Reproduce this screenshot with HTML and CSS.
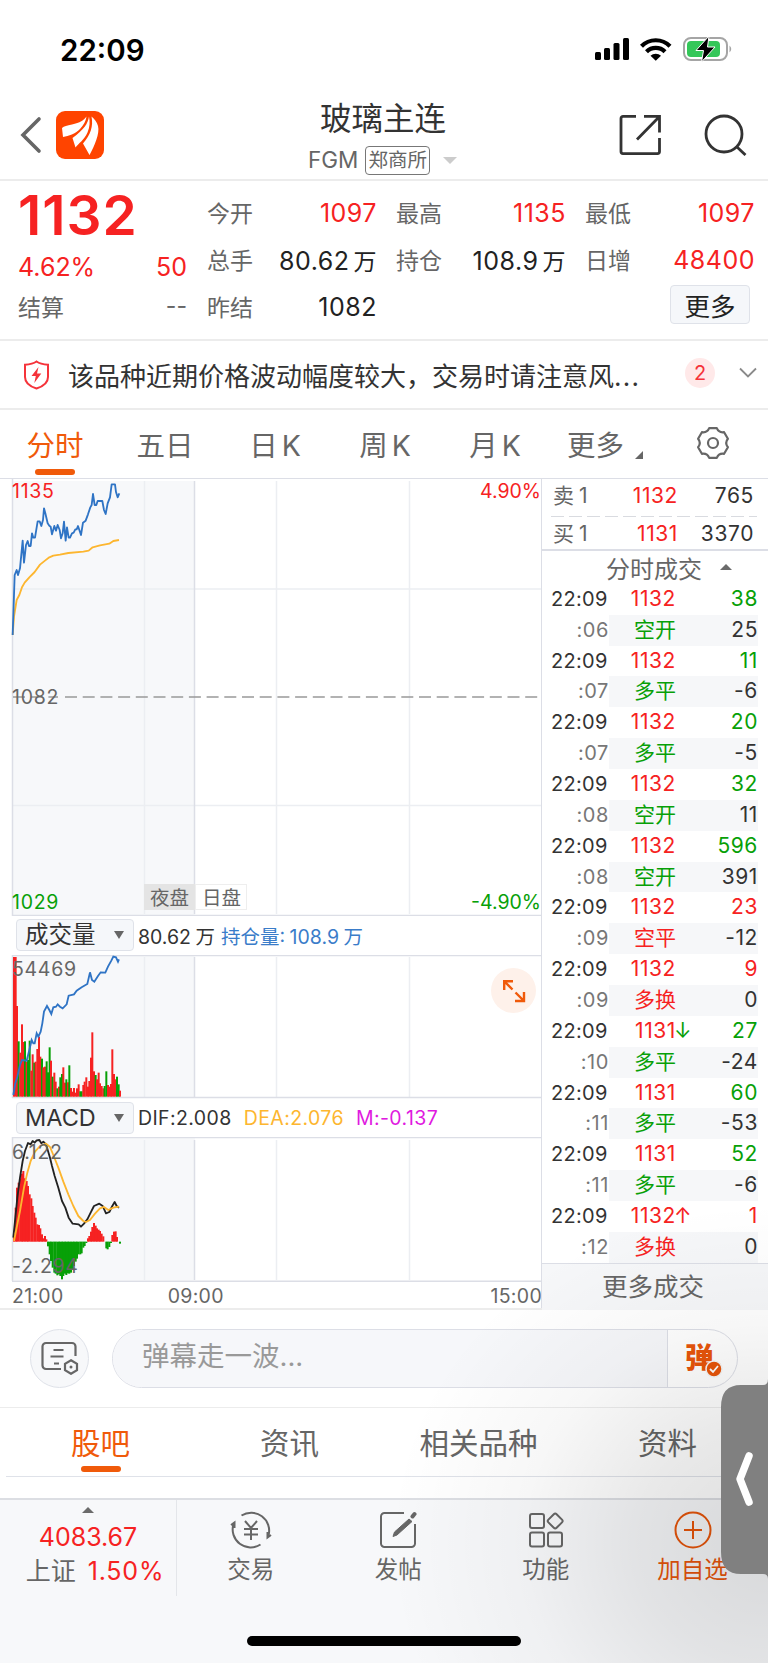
FILE: index.html
```html
<!DOCTYPE html>
<html lang="zh-CN">
<head>
    <meta charset="UTF-8">
    <meta name="viewport" content="width=device-width, initial-scale=1.0">
    <title>玻璃主连 FGM</title>
    <link rel="stylesheet" href="styles.css">
</head>
<body>
    <div class="phone">
        <div class="status">
            <span class="clock">22:09</span>
            <svg class="status-icons" width="140" height="28" viewBox="0 0 140 28">
                <rect x="0" y="16" width="6" height="8" rx="1.5"/>
                <rect x="9" y="12" width="6" height="12" rx="1.5"/>
                <rect x="18.500" y="7" width="6" height="17" rx="1.500"/>
                <rect x="28" y="2" width="6" height="22" rx="1.500"/>
                <g fill="none" stroke="#000" stroke-width="4.200">
                    <path d="M46.500 10.200a20 20 0 0 1 28.500 0"/>
                    <path d="M51.500 15.800a13 13 0 0 1 18.500 0"/>
                </g>
                <path d="M55.500 19.800a7.500 7.500 0 0 1 10.500 0l-5.250 5z"/>
                <rect x="89" y="2" width="43" height="22" rx="7" fill="none" stroke="#a5a5a5" stroke-width="2"/>
                <rect x="92" y="5" width="33" height="16" rx="4" fill="#34c759"/>
                <path d="M134.500 9.500q3.500 3.500 0 7z" fill="#a5a5a5"/>
                <path d="M114 0L101 14.500h7.500L106.500 26 120 11h-7.500z" stroke="#fff" stroke-width="1"/>
            </svg>
        </div>

        <header class="header">
            <div class="header-left">
                <svg width="22" height="38" viewBox="0 0 22 38"><path d="M19 3L3 19l16 16" fill="none" stroke="#666" stroke-width="3.600" stroke-linecap="round"/></svg>
                <svg width="48" height="48" viewBox="0 0 48 48">
                    <rect width="48" height="48" rx="9" fill="#ff4400"/>
                    <g fill="#fff">
                        <path d="M30.500 5.500C28 9 24 12 16 13.500c-5 1-8 1.500-10 3.500L7 26c6-1.500 12-2.500 17-8 3.500-4 6-8 6.500-12.500z"/>
                        <path d="M33 5.500c-1 7-5 13-16.500 21.500l3 9.500c3-4 9-8 12-15 2.500-6 2.500-11 1.500-16z"/>
                        <path d="M35.500 5.500c2 10-1 18-8.500 27l6.500 11.500c5-9 10.500-22 8.500-29-1-4-3.500-7-6.500-9.500z"/>
                    </g>
                </svg>
            </div>
            <div class="title">
                <h1>玻璃主连</h1>
                <p><span>FGM</span><span class="exchange">郑商所</span><i class="tri-down"></i></p>
            </div>
            <div class="header-right">
                <svg width="44" height="42" viewBox="0 0 44 42" fill="none" stroke="#333" stroke-width="2.800">
                    <path d="M17 2.400H4a2 2 0 0 0-2 2v33.200a2 2 0 0 0 2 2h34.500a2 2 0 0 0 2-2V24"/>
                    <path d="M25 2.400h15.500v16M40 3L18 25.500"/>
                </svg>
                <svg width="44" height="42" viewBox="0 0 44 42" fill="none" stroke="#333" stroke-width="2.800"><circle cx="20" cy="20" r="18"/><path d="M33 33l8.500 8"/></svg>
            </div>
        </header>

        <section class="quote">
            <div class="quote-main">
                <div class="last">1132</div>
                <div class="pair change"><span>4.62%</span><span>50</span></div>
                <div class="pair settle"><span>结算</span><span>--</span></div>
            </div>
            <div class="quote-grid">
                <div class="pair"><span>今开</span><b class="red">1097</b></div>
                <div class="pair"><span>最高</span><b class="red">1135</b></div>
                <div class="pair"><span>最低</span><b class="red">1097</b></div>
                <div class="pair"><span>总手</span><b>80.62<em>万</em></b></div>
                <div class="pair"><span>持仓</span><b>108.9<em>万</em></b></div>
                <div class="pair"><span>日增</span><b class="red">48400</b></div>
                <div class="pair"><span>昨结</span><b>1082</b></div>
                <div></div>
                <div class="more-cell"><button class="more">更多</button></div>
            </div>
        </section>

        <section class="notice">
            <svg width="27" height="30" viewBox="0 0 27 30"><path d="M13.500 1.500C10 4 6 4.500 2 4.800V17c0 6 5 9.500 11.500 11.500C20 26.500 25 23 25 17V4.800C21 4.500 17 4 13.500 1.500z" fill="none" stroke="#f5333a" stroke-width="2"/><path d="M15.500 7L8.500 16h4.300l-1.500 7 7-9.500h-4.300z" fill="#f5333a"/></svg>
            <p>该品种近期价格波动幅度较大，交易时请注意风<em>...</em></p>
            <span class="count">2</span>
            <svg class="chevron" width="18" height="12" viewBox="0 0 18 12"><path d="M1 1.500l8 8 8-8" fill="none" stroke="#8a8a8a" stroke-width="1.800"/></svg>
        </section>

        <nav class="periods">
            <a class="on">分时</a><a>五日</a><a>日 K</a><a>周 K</a><a>月 K</a><a class="drop">更多<i></i></a>
            <svg width="34" height="32" viewBox="0 0 34 32" fill="none" stroke="#666" stroke-width="2.200" stroke-linejoin="round"><path d="M13.200 1.200h7.600Q22.750 6 28.100 5.200l3.800 6.500Q28.500 16 31.900 20.300l-3.800 6.500Q22.750 26 20.800 30.800h-7.600Q11.250 26 5.900 26.800L2.100 20.300Q5.500 16 2.100 11.700L5.900 5.200Q11.250 6 13.200 1.200z"/><circle cx="17" cy="16" r="5"/></svg>
        </nav>

        <main class="board">
            <div class="charts">
                <svg class="chart" width="542" height="437" viewBox="0 0 542 437">
                    <rect x="13" y="2" width="182" height="434" fill="#f7f8fa"/>
                    <path class="grid" d="M144.500 2v433M276.500 2v433M409.500 2v433M13 110h529M13 326.500h529"/>
                    <path class="axis" d="M12.500 0v437M194.500 2v433M12 436.500h530"/>
                    <path d="M13 218h45M65 218h474" stroke="#999" stroke-width="1.500" stroke-dasharray="12 5.700"/>
                    <g transform="scale(.3333) translate(0 -27)" fill="none" stroke-width="5.500" stroke-linejoin="round">
                        <polyline stroke="#fdb62f" points="38,495 42,440 50,390 58,375 66,352 74,338 88,322 104,306 120,284 135,272 148,262 160,257 180,254 205,249 250,245 266,242 278,232 300,226 328,221 340,213 357,210"/>
                        <polyline stroke="#2f74c5" points="38,495 44,315 50,300 54,315 60,295 68,212 72,278 78,225 83,213 87,228 92,228 96,190 100,203 105,203 113,154 119,154 124,168 129,150 132,115 136,130 143,160 148,167 152,170 156,193 163,168 168,182 173,165 179,180 183,205 188,190 192,155 197,212 201,172 206,203 210,203 216,190 221,188 226,178 230,178 234,168 243,195 249,158 257,152 264,133 271,112 275,105 279,72 284,105 289,105 293,93 307,93 312,120 317,132 323,100 330,82 335,43 345,43 348,66 353,82 358,70"/>
                    </g>
                    <text x="12" y="19" class="up wide">1135</text>
                    <text x="541" y="19" text-anchor="end" class="up">4.90%</text>
                    <text x="12" y="225" class="wide">1082</text>
                    <rect x="144" y="405" width="51" height="26" fill="#e4e4e4"/>
                    <rect x="195.500" y="405.500" width="51" height="25" fill="#fff" stroke="#eee"/>
                    <text x="150" y="426">夜盘</text>
                    <text x="202" y="426">日盘</text>
                    <text x="12" y="430" class="down wide">1029</text>
                    <text x="541" y="430" text-anchor="end" class="down">-4.90%</text>
                </svg>
                <div class="indicator vol">
                    <span class="select">成交量<i></i></span>
                    <span>80.62 万</span><span class="blue">持仓量: 108.9 万</span>
                </div>
                <div class="volume">
                    <svg class="chart" width="542" height="144" viewBox="0 0 542 144">
                        <rect x="13" y="1" width="182" height="141" fill="#f7f8fa"/>
                        <path class="grid" d="M144.500 2v140M276.500 2v140M409.500 2v140"/>
                        <path class="axis" d="M12.500 0v143M194.500 2v140M12 .5h530M12 142.500h530"/>
                        <g transform="scale(.3333) translate(0 -255)">
                            <g id="volume-bars"></g>
                            <polyline fill="none" stroke="#2f74c5" stroke-width="5.500" points="40,675 46,640 52,620 60,585 66,570 80,572 88,540 95,510 100,520 104,520 110,490 115,500 122,485 127,460 132,425 141,408 148,420 154,432 160,412 168,410 173,403 180,410 188,415 200,403 206,377 222,373 230,362 245,352 262,342 270,307 276,330 283,335 294,318 302,307 316,308 324,290 334,272 340,260 348,262 354,275 357,268"/>
                        </g>
                        <text x="12" y="21" class="wide">54469</text>
                    </svg>
                    <span class="expand"><svg width="24" height="24" viewBox="0 0 24 24" fill="none" stroke="#f05a0a" stroke-width="2.400"><path d="M2.200 11V2.200H11M2.500 2.500l8 8M22 13v9h-9M21.500 21.500l-8-8"/></svg></span>
                </div>
                <div class="indicator macd">
                    <span class="select">MACD<i></i></span>
                    <span>DIF:2.008</span><span class="yellow">DEA:2.076</span><span class="pink">M:-0.137</span>
                </div>
                <svg class="chart" width="542" height="145" viewBox="0 0 542 145">
                    <rect x="13" y="1" width="182" height="142" fill="#f7f8fa"/>
                    <path class="grid" d="M144.500 3v140M276.500 3v140M409.500 3v140"/>
                    <path class="axis" d="M12.500 0v144M194.500 3v140M12 .5h530M12 144.300h530"/>
                    <g transform="scale(.3333) translate(0 -138)">
                        <g id="macd-bars"></g>
                        <g fill="none" stroke-width="5.500" stroke-linejoin="round">
                            <polyline stroke="#222" points="40,440 47,370 52,320 60,260 68,210 75,180 84,156 92,160 98,150 104,155 110,148 118,147 124,157 130,152 138,160 144,180 150,200 156,225 164,255 175,290 186,330 196,350 206,380 218,398 236,400 243,407 252,398 262,385 272,365 282,345 298,338 308,345 318,367 328,363 337,345 344,333 350,345 357,350"/>
                            <polyline stroke="#fdb62f" points="42,450 50,410 60,360 72,290 82,245 92,210 105,182 120,165 138,158 150,168 160,192 175,230 190,272 205,310 220,345 235,375 250,390 258,393 270,387 285,368 300,352 312,348 325,357 340,350 357,347"/>
                        </g>
                    </g>
                    <text x="12" y="22" class="wide">6.122</text>
                    <text x="12" y="136" class="wide">-2.294</text>
                </svg>
                <div class="times"><span>21:00</span><span>09:00</span><span>15:00</span></div>
            </div>

            <aside class="ticks">
                <div class="book">
                    <div class="level"><span>卖 1</span><span class="red">1132</span><span>765</span></div>
                    <div class="level"><span>买 1</span><span class="red">1131</span><span>3370</span></div>
                </div>
                <div class="ticks-title">分时成交<i class="tri-up"></i></div>
                <div class="tick"><span>22:09</span><span class="red">1132</span><span class="green">38</span><span>:06</span><span class="green">空开</span><span>25</span></div>
                <div class="tick"><span>22:09</span><span class="red">1132</span><span class="green">11</span><span>:07</span><span class="green">多平</span><span>-6</span></div>
                <div class="tick"><span>22:09</span><span class="red">1132</span><span class="green">20</span><span>:07</span><span class="green">多平</span><span>-5</span></div>
                <div class="tick"><span>22:09</span><span class="red">1132</span><span class="green">32</span><span>:08</span><span class="green">空开</span><span>11</span></div>
                <div class="tick"><span>22:09</span><span class="red">1132</span><span class="green">596</span><span>:08</span><span class="green">空开</span><span>391</span></div>
                <div class="tick"><span>22:09</span><span class="red">1132</span><span class="red">23</span><span>:09</span><span class="red">空平</span><span>-12</span></div>
                <div class="tick"><span>22:09</span><span class="red">1132</span><span class="red">9</span><span>:09</span><span class="red">多换</span><span>0</span></div>
                <div class="tick"><span>22:09</span><span class="red">1131<i class="arrow green">↓</i></span><span class="green">27</span><span>:10</span><span class="green">多平</span><span>-24</span></div>
                <div class="tick"><span>22:09</span><span class="red">1131</span><span class="green">60</span><span>:11</span><span class="green">多平</span><span>-53</span></div>
                <div class="tick"><span>22:09</span><span class="red">1131</span><span class="green">52</span><span>:11</span><span class="green">多平</span><span>-6</span></div>
                <div class="tick"><span>22:09</span><span class="red">1132<i class="arrow">↑</i></span><span class="red">1</span><span>:12</span><span class="red">多换</span><span>0</span></div>
                <div class="ticks-more">更多成交</div>
            </aside>
        </main>

        <section class="danmu">
            <span class="danmu-set">
                <svg width="38" height="34" viewBox="0 0 38 34" fill="none" stroke="#666" stroke-width="2.200"><path d="M20 28H5a3.500 3.500 0 0 1-3.500-3.500v-19A3.500 3.500 0 0 1 5 2h26a3.500 3.500 0 0 1 3.500 3.500V15M12.500 9h10M9.500 15.500h13M13 22.500h5"/><path d="M30 19.200l6 3.600v6.400l-6 3.600-6-3.600v-6.400z"/><circle cx="30" cy="26" r="1.500" fill="#666" stroke="none"/></svg>
            </span>
            <div class="danmu-box">
                <span class="danmu-input">弹幕走一波...</span>
                <span class="danmu-btn">弹<svg width="18" height="18" viewBox="0 0 18 18"><circle cx="9" cy="9" r="8" fill="#e8550a" stroke="#f6f6f6" stroke-width="1.500"/><path d="M5 9l3 3 5-6" fill="none" stroke="#fff" stroke-width="1.800"/></svg></span>
            </div>
        </section>

        <nav class="tabs"><a class="on">股吧</a><a>资讯</a><a>相关品种</a><a>资料</a></nav>

        <footer class="bottom">
            <div class="index">
                <i class="tri-up"></i>
                <b>4083.67</b>
                <p><span>上证</span><b>1.50%</b></p>
            </div>
            <a>
                <svg width="44" height="38" viewBox="0 0 44 38" fill="none" stroke="#666" stroke-width="2"><path d="M12.500 4.500a18 18 0 0 1 27 20M31.500 33.500A18 18 0 0 1 4.500 13M2 14l3.500-2.500V17M42 24l-3.500 2.500V21M16 10l6 7 6-7M22 17v12M15 18h14M15 23.500h14"/></svg>
                交易
            </a>
            <a>
                <svg width="38" height="38" viewBox="0 0 38 38" fill="none" stroke="#666" stroke-width="2"><path d="M25 2H5.500A3.500 3.500 0 0 0 2 5.500v27A3.500 3.500 0 0 0 5.500 36h27a3.500 3.500 0 0 0 3.500-3.500V13"/><path d="M33.500 5.500l2-2.500" stroke-width="4" stroke-linecap="round"/><path d="M30 8l3 2.500L18 24l-4 1.500 1.500-4.500z" fill="#666" stroke-width="1"/></svg>
                发帖
            </a>
            <a>
                <svg width="38" height="38" viewBox="0 0 38 38" fill="none" stroke="#666" stroke-width="2"><rect x="3" y="3" width="14" height="14" rx="2"/><rect x="3" y="21.500" width="14" height="14" rx="2"/><rect x="21" y="21.500" width="14" height="14" rx="2"/><path d="M26.800 3.200q1.400-1.400 2.800 0l5.400 5.400q1.400 1.400 0 2.800l-5.400 5.400q-1.400 1.400-2.800 0l-5.400-5.400q-1.400-1.400 0-2.800z"/></svg>
                功能
            </a>
            <a class="add">
                <svg width="38" height="38" viewBox="0 0 38 38" fill="none" stroke="#e8550a" stroke-width="2"><circle cx="19" cy="19" r="17.500"/><path d="M19 10v18M10 19h18"/></svg>
                加自选
            </a>
            <span class="home"></span>
        </footer>

        <div class="side-shade"></div>
        <svg class="side-handle" width="47" height="200" viewBox="0 0 47 200">
            <path d="M47 0q0 6-5 6H20Q0 6 0 28v145q0 22 20 22h22q5 0 5 5z" fill="#808080"/>
            <path d="M28 77L19 100l9 23" fill="none" stroke="#fff" stroke-width="7.500" stroke-linecap="round" stroke-linejoin="round"/>
        </svg>
    </div>
    <script src="script.js"></script>
</body>
</html>
```

FILE: styles.css
```css
* {
    box-sizing: border-box;
}
body {
    margin: 0;
    background: #fff;
    color: #333;
    font-family: Inter, "Noto Sans CJK SC", sans-serif;
}
h1, p {
    margin: 0;
    font-weight: 400;
}
b {
    font-weight: 400;
}
em, i {
    font-style: normal;
}
svg {
    display: block;
    flex: none;
}
.phone {
    position: relative;
    width: 768px;
    height: 1663px;
    overflow: hidden;
}
.red {
    color: #f62222;
}
.green {
    color: #07a007;
}
.tri-up {
    border: 6.5px solid transparent;
    border-top: 0;
    border-bottom: 6.5px solid #6b6b6b;
}
.tri-down {
    border: 7px solid transparent;
    border-bottom: 0;
    border-top: 7px solid #ccc;
}

/* status bar */
.status {
    display: flex;
    justify-content: space-between;
    align-items: center;
    height: 90px;
    padding: 9px 33px 0 60px;
}
.clock {
    font-size: 29.5px;
    font-weight: 600;
    color: #000;
}

/* header */
.header {
    display: flex;
    justify-content: space-between;
    height: 91px;
    border-bottom: 2px solid #ececec;
}
.header-left {
    display: flex;
    align-items: center;
    gap: 14px;
    width: 200px;
    padding-left: 20px;
    padding-top: 1px;
}
.title {
    display: flex;
    flex-direction: column;
    align-items: center;
}
.title h1 {
    font-size: 31.5px;
    line-height: 42px;
    margin: 8px 0 0 -2px;
}
.title p {
    display: flex;
    align-items: center;
    margin: 5px 0 0 -3px;
    font-size: 22.5px;
    line-height: 30px;
    color: #666;
}
.exchange {
    height: 29px;
    margin: 0 13px 0 7px;
    padding: 0 2px;
    border: 1.5px solid #777;
    border-radius: 4px;
    font-size: 19.5px;
    line-height: 27px;
}
.header-right {
    display: flex;
    align-items: center;
    justify-content: flex-end;
    gap: 41px;
    width: 200px;
    padding: 1px 20px 0 0;
}

/* quote */
.quote {
    display: flex;
    gap: 20px;
    height: 160px;
    padding: 0 12px 0 18px;
    border-bottom: 2px solid #ececec;
}
.quote-main {
    width: 169px;
}
.last {
    height: 68px;
    font-size: 55px;
    line-height: 68px;
    font-weight: 600;
    letter-spacing: 1px;
    color: #f62222;
}
.pair {
    display: flex;
    justify-content: space-between;
    align-items: center;
    font-size: 23px;
    color: #666;
}
.quote-grid .pair span, .settle span {
    margin-top: -2px;
}
.pair b {
    font-size: 25px;
    letter-spacing: .5px;
    color: #222;
}
.pair b.red {
    color: #f62222;
}
.pair em {
    margin-left: 4px;
    font-size: 23px;
}
.change {
    height: 36px;
    font-size: 25px;
    color: #f62222;
}
.settle {
    height: 44px;
}
.quote-grid {
    flex: 1;
    display: grid;
    grid-template-columns: 170px 170px 170px;
    grid-template-rows: 47px 48px 46px;
    column-gap: 19px;
    padding-top: 8px;
}
.more-cell {
    display: flex;
    justify-content: flex-end;
    padding: 1px 5px 0 0;
}
.more {
    width: 80px;
    height: 39px;
    padding: 0;
    border: 1.5px solid #dfe2e9;
    border-radius: 4px;
    background: #f5f7fa;
    color: #222;
    font: 25.5px "Noto Sans CJK SC", sans-serif;
    line-height: 35px;
}

/* notice */
.notice {
    display: flex;
    align-items: center;
    height: 69px;
    padding: 0 11px 0 23px;
    border-bottom: 2px solid #ececec;
}
.notice p {
    flex: 1;
    margin-left: 18px;
    font-size: 26px;
    white-space: nowrap;
}
.notice em {
    letter-spacing: 1.2px;
}
.count {
    width: 30px;
    height: 30px;
    margin: 0 24px 3px 0;
    border-radius: 50%;
    background: #ffe9e9;
    color: #f5333a;
    font-size: 20px;
    line-height: 30px;
    text-align: center;
}
.chevron {
    margin-bottom: 4px;
}

/* period tabs */
.periods {
    display: flex;
    align-items: center;
    height: 69px;
    padding-bottom: 2px;
    border-bottom: 1.5px solid #dcdee6;
    font-size: 28.5px;
    color: #666;
    word-spacing: -4px;
}
.periods a {
    width: 110px;
    text-align: center;
}
.periods svg {
    margin-left: 36px;
}
.periods a, .tabs a {
    position: relative;
}
.on {
    color: #f05a0a;
}
.on::after {
    content: "";
    position: absolute;
    left: 50%;
    bottom: -11px;
    width: 40px;
    height: 6px;
    margin-left: -20px;
    border-radius: 3px;
    background: #f05a0a;
}
.drop i {
    display: inline-block;
    margin-left: 11px;
    border-left: 8px solid transparent;
    border-bottom: 8px solid #666;
    transform: translateY(3px);
}

/* charts */
.board {
    display: flex;
    height: 831px;
    border-bottom: 2px solid #ececec;
}
.charts {
    width: 542px;
}
.chart text {
    font-size: 19.5px;
    fill: #666;
}
.chart .wide {
    letter-spacing: .7px;
}
.chart .up {
    fill: #f62222;
}
.chart .down {
    fill: #07a007;
}
.grid, .axis {
    fill: none;
    stroke: #eceef2;
    stroke-width: 1.5;
}
.axis {
    stroke: #dcdee6;
}
.indicator {
    display: flex;
    align-items: center;
    gap: 6px;
    height: 38px;
    padding-left: 16px;
    font-size: 19.5px;
    color: #333;
}
.vol {
    height: 39px;
    word-spacing: -1px;
}
.vol span {
    margin-top: -1px;
}
.select {
    display: flex;
    align-items: center;
    justify-content: space-between;
    width: 118px;
    height: 32px;
    margin-right: -2px;
    padding: 0 9px 0 8px;
    border: 1.5px solid #dfe2e9;
    border-radius: 4px;
    background: #f5f7fa;
    font-size: 23.5px;
    line-height: 28px;
    letter-spacing: 0;
}
.select i {
    border: 5px solid transparent;
    border-top: 8px solid #666;
    border-bottom: 0;
}
.blue {
    color: #3a7cc9;
}
.macd {
    gap: 12px;
    letter-spacing: .4px;
}
.macd .select {
    margin-right: -8px;
}
.yellow {
    color: #fdb62f;
}
.pink {
    color: #e01ae0;
}
.volume {
    position: relative;
}
.expand {
    position: absolute;
    right: 6px;
    top: 13px;
    display: flex;
    align-items: center;
    justify-content: center;
    width: 45px;
    height: 45px;
    border-radius: 50%;
    background: #fef1ea;
}
.times {
    display: grid;
    grid-template-columns: 1fr 1fr 1fr;
    padding: 2px 0 0 12px;
    font-size: 19.5px;
    line-height: 24px;
    letter-spacing: .3px;
    color: #666;
}
.times span:nth-child(2) {
    margin-left: -21px;
}
.times span:last-child {
    text-align: right;
}

/* trades */
.ticks {
    flex: 1;
    display: flex;
    flex-direction: column;
    margin-left: -1px;
    border-left: 1.5px solid #dcdee6;
    font-size: 21px;
    letter-spacing: .6px;
}
.book {
    height: 72px;
    border-bottom: 2px solid #dcdee6;
}
.level {
    display: grid;
    grid-template-columns: 50px 75px 76px;
    height: 35px;
    padding-left: 11px;
    line-height: 34px;
    text-align: right;
    color: #333;
}
.level:first-child {
    height: 38px;
    background: repeating-linear-gradient(90deg, #d9dbe0 0 13px, transparent 13px 18px) 9px 37px / 206px 2px no-repeat;
}
.level span:first-child {
    text-align: left;
    color: #666;
    word-spacing: -2px;
}
.ticks-title {
    display: flex;
    align-items: center;
    justify-content: flex-end;
    gap: 18px;
    height: 33px;
    padding: 0 36px 1px 0;
    font-size: 24px;
    letter-spacing: 0;
    color: #666;
}
.tick {
    display: grid;
    grid-template-columns: 58px 67px 82px;
    grid-template-rows: 30.8px 30.9px;
    padding-left: 9px;
    line-height: 30px;
    text-align: right;
    color: #333;
}
.tick span {
    position: relative;
}
.tick span:nth-child(1) {
    text-align: left;
    font-size: 20px;
    letter-spacing: .3px;
}
.tick span:nth-child(4) {
    font-size: 20px;
    color: #777;
}
.tick span:nth-child(n+5) {
    background: #f6f7f9;
}
.tick span:nth-child(5) {
    letter-spacing: 0;
}
.arrow {
    position: absolute;
    left: 100%;
    top: 0;
    margin-left: -2px;
    font-size: 21px;
}
.ticks-more {
    flex: 1;
    padding-right: 4px;
    border-top: 1.5px solid #dcdee6;
    background: #f6f7f9;
    font-size: 25.5px;
    letter-spacing: 0;
    line-height: 46px;
    text-align: center;
    color: #666;
}

/* danmu */
.danmu {
    display: flex;
    align-items: center;
    gap: 23px;
    height: 98px;
    padding: 0 30px 1px;
    border-bottom: 1px solid #ececec;
}
.danmu-set {
    display: flex;
    align-items: center;
    justify-content: center;
    width: 59px;
    height: 59px;
    border: 1.5px solid #dfe2e9;
    border-radius: 50%;
    background: #f7f8fa;
}
.danmu-box {
    flex: 1;
    display: flex;
    height: 59px;
    border: 1.5px solid #dcdee6;
    border-radius: 30px;
    overflow: hidden;
}
.danmu-input {
    flex: 1;
    padding-left: 29px;
    background: #f6f7fa;
    font-size: 27.5px;
    line-height: 52px;
    color: #999;
}
.danmu-btn {
    position: relative;
    width: 70px;
    padding-left: 17px;
    border-left: 1.5px solid #dcdee6;
    font-size: 28.5px;
    font-weight: 900;
    line-height: 55px;
    color: #e8550a;
}
.danmu-btn svg {
    position: absolute;
    left: 37px;
    top: 30px;
}

/* content tabs */
.tabs {
    display: flex;
    align-items: center;
    height: 69px;
    margin-left: 6px;
    padding-bottom: 2px;
    border-bottom: 1.5px solid #dfe2e9;
    font-size: 29.5px;
    color: #666;
}
.tabs a {
    flex: none;
    width: 189px;
    text-align: center;
}
.tabs .on::after {
    bottom: -10px;
}

/* bottom bar */
.bottom {
    position: relative;
    display: flex;
    height: 165px;
    margin-top: 21px;
    border-top: 2px solid #dcdee3;
    background: #f7f8fa;
    font-size: 23.5px;
    color: #666;
}
.index {
    display: flex;
    flex-direction: column;
    align-items: center;
    width: 177px;
    height: 96px;
    padding-top: 7px;
    border-right: 1.5px solid #e4e6ea;
    font-size: 25px;
    line-height: 34px;
}
.index b {
    margin-top: 7px;
    color: #f62222;
}
.index p {
    display: flex;
    gap: 12px;
    margin-left: 14px;
}
.index p b {
    margin-top: 0;
    letter-spacing: .8px;
}
.bottom a {
    display: flex;
    flex-direction: column;
    align-items: center;
    width: 147.5px;
    padding-top: 11px;
    line-height: 41px;
}
.bottom .add {
    width: 146px;
    color: #e8550a;
}
.home {
    position: absolute;
    left: 247px;
    bottom: 17px;
    width: 274px;
    height: 10px;
    border-radius: 5px;
    background: #000;
}

/* floating side handle */
.side-shade {
    position: absolute;
    right: 0;
    bottom: 0;
    width: 400px;
    height: 460px;
    background: radial-gradient(ellipse 380px 340px at 400px 340px, rgba(0, 0, 0, .13), rgba(0, 0, 0, .085) 35%, rgba(0, 0, 0, .03) 65%, transparent);
}
.side-handle {
    position: absolute;
    right: 0;
    top: 1379px;
}
```

FILE: script.js
```js
// [x, top, color] in thirds of a pixel, r = up, g = down
const volume = "42,261,r 47,261,r 51,408,r 56,514,g 61,548,r 66,463,r 70,516,r 75,514,g 80,575,r 84,570,g 89,512,g 94,602,r 98,553,r 103,578,g 107,575,r 112,537,r 117,500,r 121,560,r 126,566,g 130,592,r 135,590,r 140,574,g 144,607,g 149,532,g 153,572,r 158,620,g 163,608,r 167,635,r 172,655,g 177,650,r 181,622,g 186,612,g 190,592,r 195,638,r 199,628,g 204,637,r 208,586,g 213,654,r 218,665,r 222,654,r 227,668,r 231,655,r 236,643,r 241,664,g 245,664,g 250,645,r 254,635,r 259,622,r 264,650,r 268,633,r 273,563,r 277,487,r 282,604,r 287,615,g 291,628,r 296,608,r 300,640,r 305,648,r 310,655,r 314,648,g 319,604,g 324,645,r 328,650,r 333,642,r 337,538,r 342,612,r 347,628,r 351,620,g 356,643,g 360,662,r";
const macd = "42,430,r 47,350,r 51,290,r 56,275,r 61,262,r 66,248,r 70,240,r 75,262,r 80,270,r 84,285,r 89,310,r 94,322,r 98,345,r 103,365,r 107,380,r 112,400,r 117,402,r 121,412,r 126,430,r 130,442,r 135,435,r 139,445,r 144,466,g 149,490,g 153,510,g 158,530,g 163,545,g 167,548,g 172,553,g 177,550,g 181,555,g 186,565,g 190,555,g 195,548,g 199,552,g 204,547,g 208,548,g 213,545,g 218,535,g 222,525,g 227,512,g 231,503,g 236,490,g 241,490,g 245,487,g 250,470,g 254,465,g 259,456,g 264,442,r 268,435,r 273,422,r 277,408,r 282,396,r 287,404,r 291,412,r 296,416,r 300,420,r 305,428,r 310,436,r 319,472,g 323,475,g 328,468,g 333,456,g 337,432,r 342,422,r 347,421,r 351,438,r 360,458,g";

function drawBars(id, data, base) {
    const group = document.getElementById(id);
    data.split(" ").forEach(function(item) {
        const [x, y, c] = item.split(",");
        const line = document.createElementNS("http://www.w3.org/2000/svg", "path");
        line.setAttribute("d", `M${x} ${base}V${y}`);
        line.setAttribute("stroke", c === "r" ? "#f62222" : "#07a007");
        line.setAttribute("stroke-width", 6);
        group.appendChild(line);
    });
}

drawBars("volume-bars", volume, 680);
drawBars("macd-bars", macd, 452);
```
